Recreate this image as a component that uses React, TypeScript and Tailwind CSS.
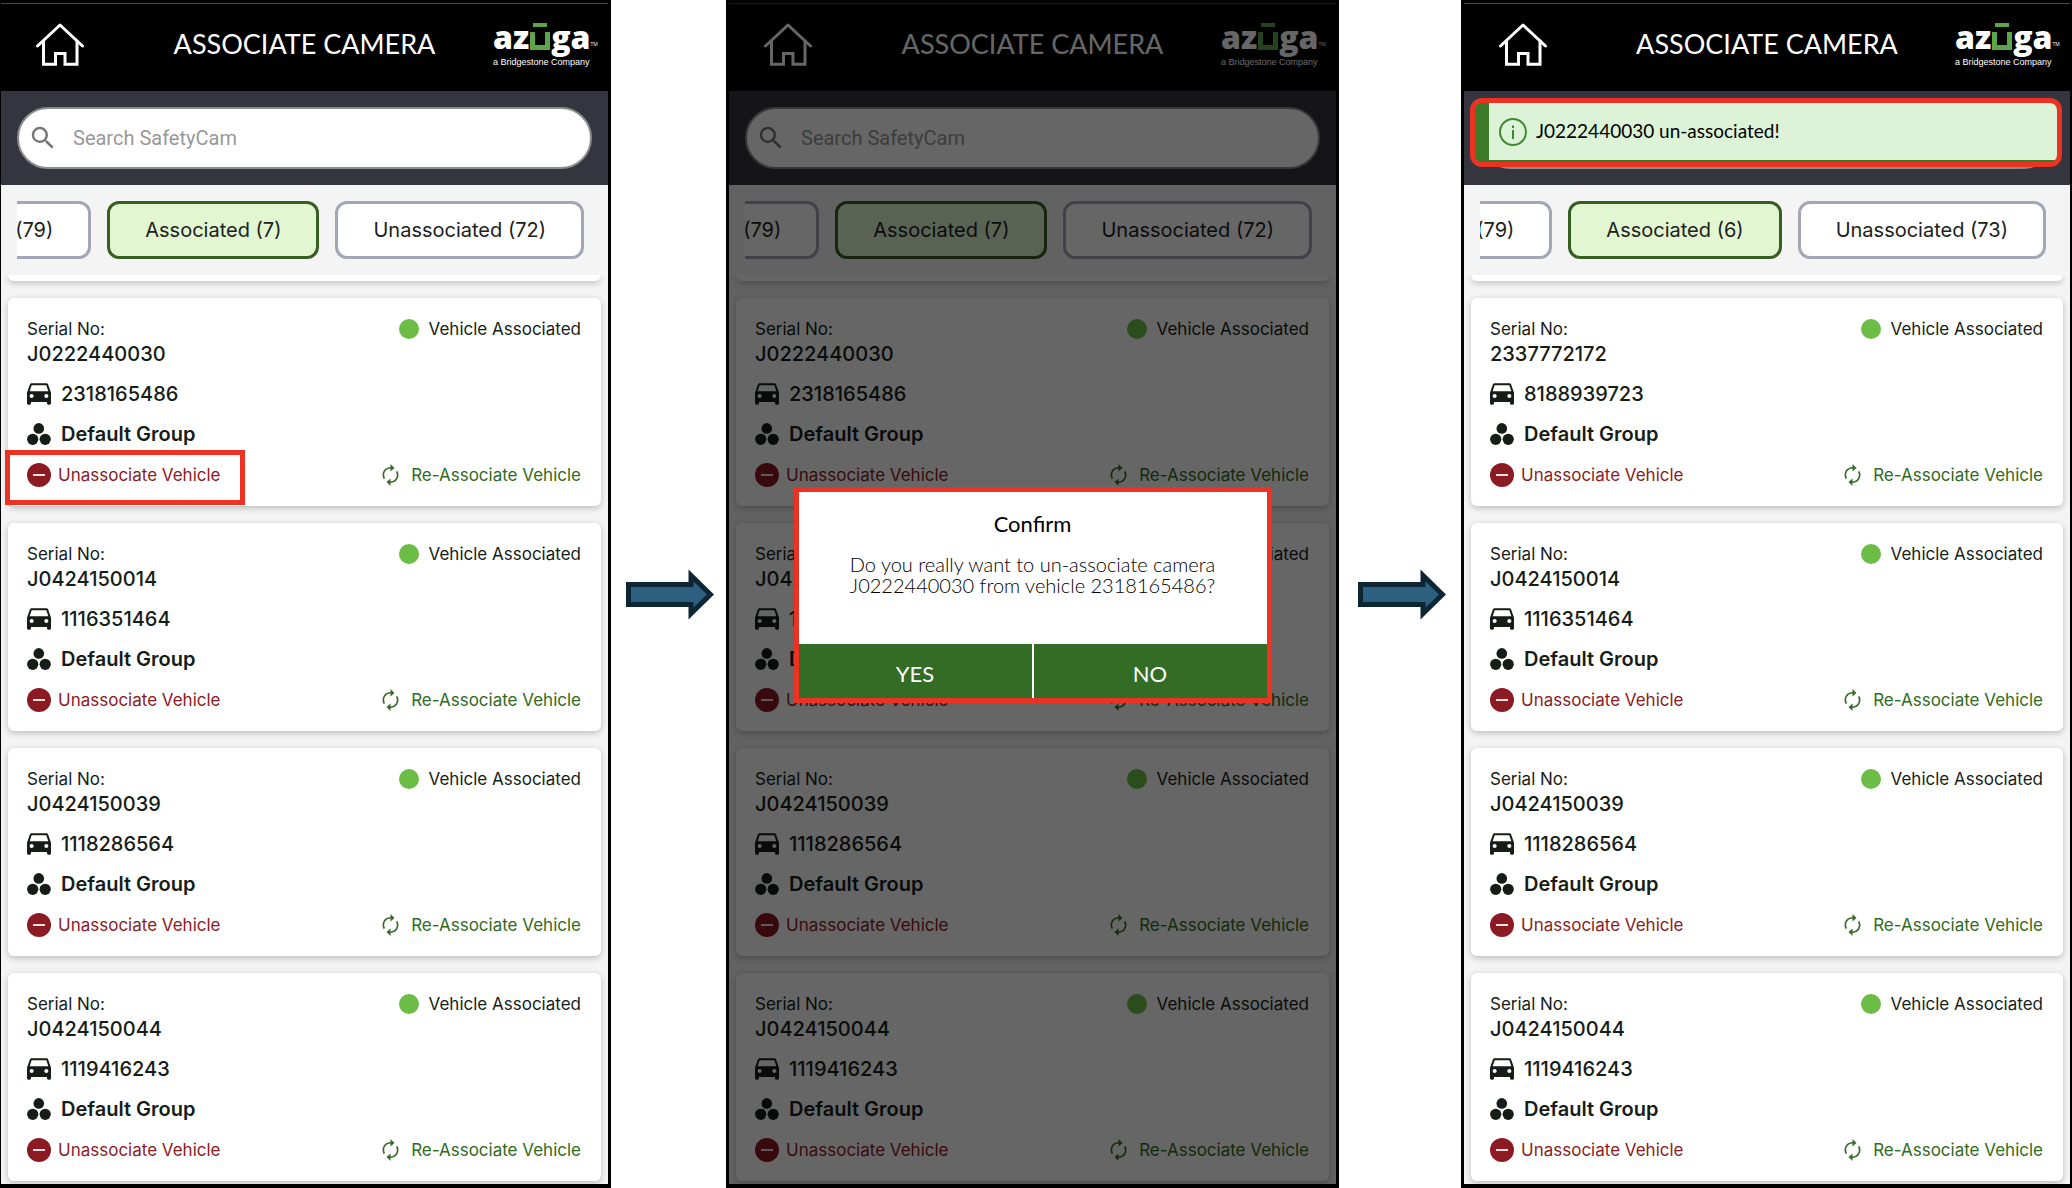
import React from "react";

type Camera = { serial: string; vehicle: string };

const others: Camera[] = [
  { serial: "J0424150014", vehicle: "1116351464" },
  { serial: "J0424150039", vehicle: "1118286564" },
  { serial: "J0424150044", vehicle: "1119416243" },
];
const before: Camera[] = [{ serial: "J0222440030", vehicle: "2318165486" }, ...others];
const after: Camera[] = [{ serial: "2337772172", vehicle: "8188939723" }, ...others];

function HomeIcon() {
  return (
    <svg width="48" height="44" viewBox="0 0 48 44" fill="none" stroke="white" strokeWidth="3" strokeLinecap="round" aria-hidden="true">
      <path d="M1.5 24 24 3l22.500 21" strokeLinejoin="round" />
      <path d="M7.500 19v23.200h12V31.500h9.500v10.700h12V19" />
    </svg>
  );
}

function CarIcon() {
  return (
    <svg width="24" height="22" viewBox="3 5 18 16" fill="currentColor" aria-hidden="true">
      <path d="M18.92 6.010C18.720 5.420 18.160 5 17.500 5h-11c-.66 0-1.210.42-1.420 1.010L3 12v8c0 .55.45 1 1 1h1c.55 0 1-.45 1-1v-1h12v1c0 .55.45 1 1 1h1c.55 0 1-.45 1-1v-8l-2.080-5.990zM6.500 16c-.83 0-1.500-.67-1.500-1.500S5.670 13 6.500 13s1.500.67 1.500 1.500S7.330 16 6.500 16zm11 0c-.83 0-1.500-.67-1.500-1.500s.67-1.500 1.500-1.500 1.500.67 1.500 1.500-.67 1.500-1.500 1.500zM5 11l1.500-4.500h11L19 11H5z" />
    </svg>
  );
}

function GroupIcon() {
  return (
    <svg width="24" height="22" viewBox="0 0 24 22" fill="currentColor" aria-hidden="true">
      <circle cx="11.800" cy="5.400" r="5.300" />
      <circle cx="5.700" cy="16.300" r="5.600" />
      <circle cx="18.200" cy="16.300" r="5.600" />
    </svg>
  );
}

function MinusIcon() {
  return (
    <svg width="24" height="24" viewBox="0 0 24 24" aria-hidden="true">
      <circle cx="12" cy="12" r="12" fill="#8c1a22" />
      <path d="M6 12h12" stroke="#f3dfe0" strokeWidth="2" />
    </svg>
  );
}

function RenewIcon() {
  return (
    <svg width="17" height="22" viewBox="4 1 16 22" fill="#3a6b2a" aria-hidden="true">
      <path d="M12 5.600v3L16 5l-4-4v3c-4.420 0-8 3.580-8 8 0 1.570.46 3.030 1.240 4.260L6.500 15A6 6 0 0 1 5.700 12c0-3.500 2.800-6.400 6.300-6.400zm6.760 2.140L17.500 9c.5.900.8 1.900.8 3 0 3.500-2.800 6.400-6.300 6.400v-3L8 19l4 4v-3c4.420 0 8-3.580 8-8 0-1.570-.46-3.030-1.240-4.260z" />
    </svg>
  );
}

function SearchIcon() {
  return (
    <svg width="30" height="30" viewBox="0 0 24 24" fill="#757575" aria-hidden="true">
      <path d="M15.500 14h-.79l-.28-.27A6.471 6.471 0 0 0 16 9.500 6.500 6.500 0 1 0 9.500 16c1.610 0 3.090-.59 4.230-1.570l.27.28v.79l5 4.990L20.490 19l-4.990-5zm-6 0C7.010 14 5 11.990 5 9.500S7.010 5 9.500 5 14 7.010 14 9.500 11.990 14 9.500 14z" />
    </svg>
  );
}

function Logo() {
  return (
    <div className="flex w-[106px] flex-col text-white" role="img" aria-label="azuga, a Bridgestone Company">
      <div className="mb-[3px] flex items-end font-['Open_Sans',sans-serif] text-[32px] leading-[32px] font-extrabold">
        <span>az</span>
        <svg className="mx-px mb-[3px] shrink-0" width="20" height="27" viewBox="0 0 20 27" aria-hidden="true">
          <path d="M3 0h14v4H3zM0 9h5v13h10V9h5v18H0z" fill="#5da54b" />
        </svg>
        <span>ga</span>
        <span className="mb-1 text-[5px] leading-[10px] font-normal">TM</span>
      </div>
      <div className="font-['Liberation_Sans',sans-serif] text-[9px] leading-3 whitespace-nowrap">a Bridgestone Company</div>
    </div>
  );
}

function Arrow() {
  return (
    <div className="flex items-center justify-center pl-[3px]">
      <svg width="88" height="51" viewBox="0 0 88 51" aria-hidden="true">
        <path d="M2.500 15.500H65V6.500L84.500 25.500 65 44.500V35.500H2.500z" fill="#2d6080" stroke="#0e2533" strokeWidth="5" />
      </svg>
    </div>
  );
}

function CameraCard({ camera, marked }: { camera: Camera; marked?: boolean }) {
  return (
    <article className="rounded-md bg-white py-[18px] pr-5 pl-[19px] text-[#161d17] shadow-[0_2px_6px_rgba(0,0,0,0.24)]">
      <div className="flex h-[26px] items-center justify-between text-[17px] leading-[28px]">
        <span>Serial No:</span>
        <span className="flex items-center gap-2.5">
          <span className="size-5 rounded-full bg-[#6cbd45]" />
          Vehicle Associated
        </span>
      </div>
      <div className="text-[20px] leading-6 font-medium">{camera.serial}</div>
      <div className="mt-4 flex items-center gap-2.5 text-[20px] leading-6 font-medium">
        <CarIcon />
        {camera.vehicle}
      </div>
      <div className="mt-4 flex items-center gap-2.5 text-[20px] leading-6 font-semibold">
        <GroupIcon />
        Default Group
      </div>
      <div className="mt-4 flex h-[26px] items-center justify-between">
        <div className="relative">
          <button type="button" className="flex h-[26px] items-center gap-[7px] text-[17px] leading-[28px] text-[#8c1a22]">
            <MinusIcon />
            Unassociate Vehicle
          </button>
          {marked && <div className="pointer-events-none absolute -top-[12px] -right-[24px] -bottom-[17px] -left-[22px] border-[5px] border-[#ec3323]" />}
        </div>
        <button type="button" className="flex h-[26px] items-center gap-3 text-[17px] leading-[28px] text-[#2f6b20]">
          <RenewIcon />
          Re-Associate Vehicle
        </button>
      </div>
    </article>
  );
}

const tab = "h-[58px] shrink-0 rounded-xl border-[3px] px-[35px] text-[20px] text-[#1c211c] whitespace-nowrap";

type ScreenProps = {
  id: string;
  frame: string;
  cameras: Camera[];
  associated: number;
  unassociated: number;
  marked?: boolean;
  toast?: React.ReactNode;
  dialog?: React.ReactNode;
};

function Screen({ id, frame, cameras, associated, unassociated, marked, toast, dialog }: ScreenProps) {
  return (
    <section className={"relative flex min-w-0 flex-col border-t-[3px] border-b-4 border-black bg-[#f4f4f4] font-['Inter',sans-serif] " + frame}>
      <header className="grid h-[88px] grid-cols-[1fr_auto_1fr] items-center border-t border-[#484848] bg-black pr-[9px] pb-[7px] pl-[35px] text-white">
        <button type="button" aria-label="Home" className="justify-self-start">
          <HomeIcon />
        </button>
        <h1 className="pr-[26px] font-['Lato',sans-serif] text-[27px] leading-8 whitespace-nowrap">ASSOCIATE CAMERA</h1>
        <div className="justify-self-end">
          <Logo />
        </div>
      </header>
      <div className="relative bg-[#35353f] py-4 px-4">
        <label htmlFor={id} className="flex h-[62px] items-center gap-[15px] rounded-full border-2 border-[#8b8b8b] bg-white pl-[9px]">
          <SearchIcon />
          <input id={id} type="text" aria-label="Search SafetyCam" placeholder="Search SafetyCam" className="min-w-0 flex-1 bg-transparent font-['Roboto',sans-serif] text-[20px] outline-none placeholder:text-[#989898]" />
        </label>
        {toast}
      </div>
      <div className="mx-4 flex justify-end gap-4 overflow-hidden pt-4 pr-2 pb-4">
        <button type="button" className={tab + " border-[#a2a6b7] bg-white"}>All (79)</button>
        <button type="button" className={tab + " border-[#365f22] bg-[#e2f6d2]"}>Associated ({associated})</button>
        <button type="button" className={tab + " border-[#a2a6b7] bg-white"}>Unassociated ({unassociated})</button>
      </div>
      <div className="flex flex-1 flex-col gap-[17px] overflow-hidden px-[7px] pb-[3px]">
        <div className="h-1.5 rounded-b-md bg-white shadow-[0_2px_6px_rgba(0,0,0,0.24)]" />
        {cameras.map((camera, i) => (
          <CameraCard key={camera.serial} camera={camera} marked={marked && i === 0} />
        ))}
      </div>
      {dialog}
    </section>
  );
}

function ConfirmDialog() {
  return (
    <div className="absolute inset-0 flex items-center justify-center bg-black/60 pt-[3px]">
      <div role="dialog" aria-label="Confirm" className="w-[478px] border-[5px] border-[#ec3323] bg-white text-center font-['Lato',sans-serif] text-black">
        <h2 className="pt-[18px] text-[22px] leading-7">Confirm</h2>
        <p className="mt-4 pb-[48px] text-[20px] leading-[21px] font-light">
          Do you really want to un-associate camera
          <br />
          J0222440030 from vehicle 2318165486?
        </p>
        <div className="grid grid-cols-2 gap-0.5 text-[22px] text-white">
          <button type="button" className="h-[54px] bg-[#336c24] pt-1">YES</button>
          <button type="button" className="h-[54px] bg-[#336c24] pt-1">NO</button>
        </div>
      </div>
    </div>
  );
}

function Toast() {
  return (
    <div role="status" className="absolute top-[7px] right-2 left-1.5 overflow-hidden rounded-xl border-[5px] border-[#ec3323] bg-[#3c7a28]">
      <div className="mb-0.5 ml-3.5 flex h-[57px] items-center gap-[9px] bg-[#dcf3d8] pl-2.5 font-['Lato',sans-serif] text-[19px] text-black">
        <svg width="28" height="28" viewBox="0 0 28 28" fill="none" stroke="#3c8a2c" strokeWidth="2" aria-hidden="true">
          <circle cx="14" cy="14" r="13" />
          <path d="M14 12v9M14 7.500v2.500" />
        </svg>
        J0222440030 un-associated!
      </div>
    </div>
  );
}

export default function App() {
  return (
    <main className="grid min-h-screen w-full grid-cols-[611fr_115fr_613fr_122fr_611fr] bg-white">
      <Screen id="search-list" frame="border-l border-r-[3px]" cameras={before} associated={7} unassociated={72} marked />
      <Arrow />
      <Screen id="search-confirm" frame="border-x-[3px]" cameras={before} associated={7} unassociated={72} dialog={<ConfirmDialog />} />
      <Arrow />
      <Screen id="search-result" frame="border-l-[3px] border-r-2" cameras={after} associated={6} unassociated={73} toast={<Toast />} />
    </main>
  );
}
